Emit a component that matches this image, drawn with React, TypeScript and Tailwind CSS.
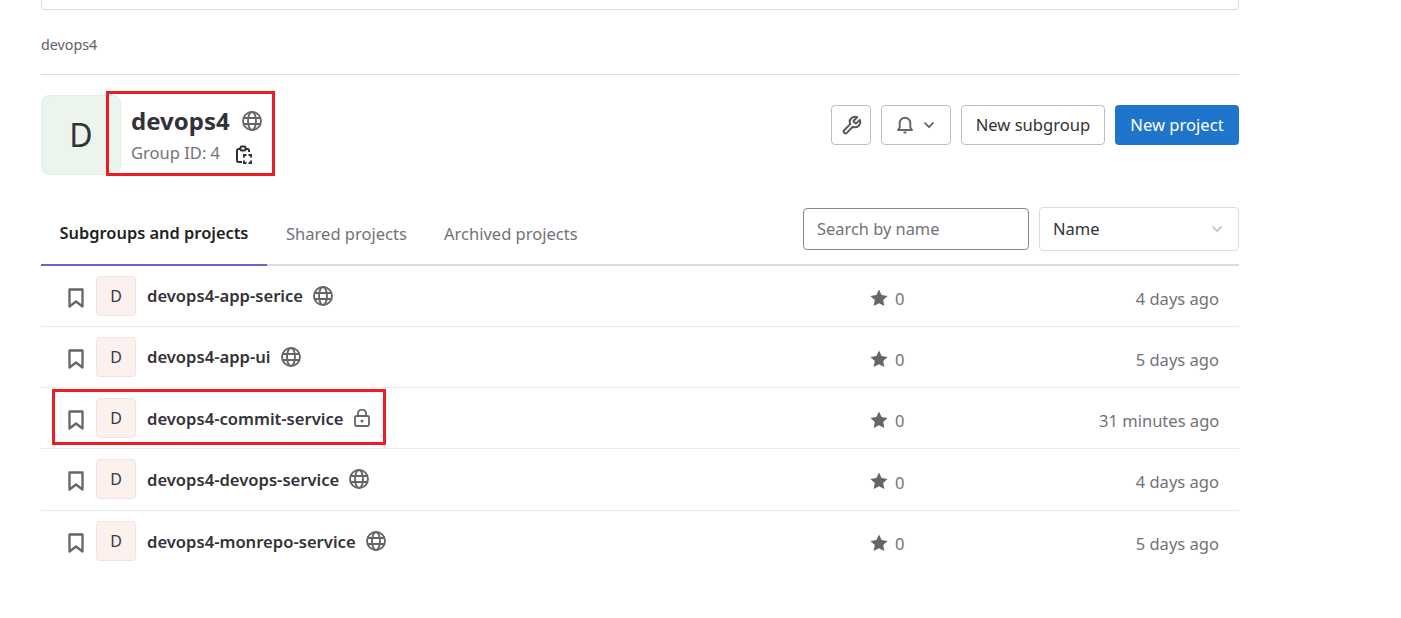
import React from "react";

interface Project {
  name: string;
  isPrivate?: boolean;
  updated: string;
  highlighted?: boolean;
}

const projects: Project[] = [
  { name: "devops4-app-serice", updated: "4 days ago" },
  { name: "devops4-app-ui", updated: "5 days ago" },
  { name: "devops4-commit-service", isPrivate: true, updated: "31 minutes ago", highlighted: true },
  { name: "devops4-devops-service", updated: "4 days ago" },
  { name: "devops4-monrepo-service", updated: "5 days ago" },
];

function GlobeIcon({ className }: { className: string }) {
  return (
    <svg viewBox="0 0 20 20" fill="none" stroke="#666" strokeWidth="1.9" className={className}>
      <circle cx="10" cy="10" r="9" />
      <ellipse cx="10" cy="10" rx="4" ry="9" />
      <path d="M1.8 7h16.4M1.8 13h16.4" />
    </svg>
  );
}

function LockIcon() {
  return (
    <svg viewBox="0 0 16 18" fill="none" stroke="#666" strokeWidth="1.8" className="h-[18px] w-4">
      <rect x="1" y="7" width="14" height="10" rx="1.5" />
      <path d="M4 7V4.500a4 4 0 0 1 8 0V7" />
      <circle cx="8" cy="12" r="1.500" fill="#666" stroke="none" />
    </svg>
  );
}

function BookmarkIcon() {
  return (
    <svg viewBox="0 0 16 20" fill="none" stroke="#666" strokeWidth="2.3" className="mt-1 h-5 w-4">
      <path d="M1.500 1.500h13v17L8 13.500l-6.500 5z" strokeLinejoin="round" />
    </svg>
  );
}

function StarIcon() {
  return (
    <svg viewBox="0 0 18 18" fill="#666" className="h-[18px] w-[18px]">
      <path d="M9 .6l2.600 5.500 6 .8-4.400 4.200 1.100 6L9 14.200 3.700 17.100l1.100-6L.4 6.900l6-.8z" />
    </svg>
  );
}

function Chevron({ className, color }: { className: string; color: string }) {
  return (
    <svg viewBox="0 0 12 8" fill="none" stroke={color} strokeWidth="1.600" className={className}>
      <path d="M1.500 1.500L6 6l4.500-4.500" />
    </svg>
  );
}

function ProjectRow({ project }: { project: Project }) {
  return (
    <div className="relative flex h-[61.25px] items-center border-b border-[#ececef] pl-[27px] pr-5 last:border-b-0">
      <BookmarkIcon />
      <div className="ml-3 flex h-10 w-10 items-center justify-center rounded border border-[#f0e4e1] bg-[#fcf1ef] text-[16px] text-[#3a383f]">
        D
      </div>
      <span className="ml-[11px] pt-[2px] text-[16.6px] font-semibold text-[#333238]">{project.name}</span>
      <span className="ml-[10px] flex items-center">
        {project.isPrivate ? <LockIcon /> : <GlobeIcon className="h-5 w-5" />}
      </span>
      <div className="ml-auto flex w-[229px] items-center gap-[7px] pt-1 text-[16.5px] text-[#737278]">
        <StarIcon />
        <span className="pt-[3px]">0</span>
      </div>
      <span className="w-[120px] whitespace-nowrap pt-[7px] text-right text-[16.55px] text-[#737278]">
        {project.updated}
      </span>
      {project.highlighted && (
        <div className="absolute left-[11px] top-px h-[56px] w-[334px] border-[3px] border-[#ed1c24]" />
      )}
    </div>
  );
}

export default function App() {
  return (
    <div className="h-[618px] w-[1401px] overflow-hidden bg-white font-['Noto_Sans','Open_Sans',sans-serif]">
      <div className="ml-[41px] w-[1198px]">
        <div className="h-[10px] rounded-b border-x border-b border-[#dcdcde]" />

        <div className="flex h-[65px] items-center border-b border-[#dcdcde] pt-[6px] text-[14.3px] text-[#626168]">
          devops4
        </div>

        {/* Group header */}
        <div className="relative mt-5 flex h-20 items-start">
          <div className="flex h-20 w-20 items-center justify-center rounded-lg border border-[#e6eee8] bg-[#ecf4ee] text-[32px] text-[#333238]">
            D
          </div>
          <div className="ml-[10px] flex flex-col">
            <div className="flex items-center gap-3">
              <h1 className="text-[24px] font-bold leading-[52px] text-[#333238]">devops4</h1>
              <GlobeIcon className="h-5 w-5" />
            </div>
            <div className="-mt-[6px] flex items-center gap-4 text-[16.55px] leading-6 text-[#737278]">
              <span>Group ID: 4</span>
              <svg viewBox="0 0 16 20" fill="none" stroke="#333238" strokeWidth="2" className="mt-[3px] h-5 w-4">
                <path d="M6 17H2.500A1.500 1.500 0 0 1 1 15.500v-10A1.500 1.500 0 0 1 2.500 4H4M10 4h1.500A1.500 1.500 0 0 1 13 5.500V7" />
                <rect x="4.500" y="1.500" width="5" height="4" rx="1" />
                <path d="M8 12.500V10h2.500M12.500 10H15v2.500M15 15.500V18h-2.500M10.500 18H8v-2.500" />
              </svg>
            </div>
          </div>

          <div className="ml-auto mt-[10px] flex items-center gap-[10px]">
            <button className="flex h-10 w-10 items-center justify-center rounded border border-[#bfbfc3] bg-white">
              <svg viewBox="0 0 24 24" fill="none" stroke="#555" strokeWidth="2.200" strokeLinecap="round" strokeLinejoin="round" className="h-[21px] w-[21px]">
                <path d="M14.700 6.300a1 1 0 0 0 0 1.400l1.600 1.600a1 1 0 0 0 1.400 0l3.770-3.770a6 6 0 0 1-7.940 7.940l-6.910 6.910a2.120 2.120 0 0 1-3-3l6.910-6.910a6 6 0 0 1 7.940-7.940z" />
              </svg>
            </button>
            <button className="flex h-10 w-[70px] items-center justify-center gap-[10px] rounded border border-[#bfbfc3] bg-white">
              <svg viewBox="0 0 16 18" fill="none" stroke="#666" strokeWidth="1.900" className="h-[18px] w-4">
                <path d="M1 14h14l-1.700-2.500V7a5.300 5.300 0 0 0-10.600 0v4.500z" strokeLinejoin="round" />
                <path d="M6.500 16.500h3" />
              </svg>
              <Chevron className="h-2 w-3" color="#555" />
            </button>
            <button className="h-10 w-[144px] rounded border border-[#bfbfc3] bg-white text-[16.6px] text-[#333238]">
              New subgroup
            </button>
            <button className="h-10 w-[124px] rounded bg-[#1f75cb] text-[16.6px] text-white">New project</button>
          </div>

          <div className="absolute left-[65px] top-[-4px] h-[85px] w-[169px] border-[3px] border-[#ed1c24]" />
        </div>

        {/* Tabs and filters */}
        <div className="mt-[32px] flex h-[58.5px] items-start border-b-2 border-[#dcdcde]">
          <div className="flex h-[58.5px] w-[226px] items-center justify-center border-b-2 border-[#6666c4] pb-[4px] text-[16.4px] font-semibold text-[#1f1e24]">
            Subgroups and projects
          </div>
          <div className="flex h-[54px] items-center pl-[19px] text-[16.55px] text-[#737278]">Shared projects</div>
          <div className="flex h-[54px] items-center pl-[37px] text-[16.55px] text-[#737278]">Archived projects</div>
          <div className="ml-auto flex items-center gap-[10px]">
            <div className="flex h-[42px] w-[226px] items-center rounded border border-[#89888d] pl-[13px] text-[16.4px] text-[#737278]">
              Search by name
            </div>
            <div className="flex h-11 w-[200px] items-center justify-between rounded border border-[#dcdcde] pl-[13px] pr-[15px] text-[16.5px] text-[#333238]">
              Name
              <Chevron className="h-2 w-3" color="#bfbfc3" />
            </div>
          </div>
        </div>

        {/* Project list */}
        <div>
          {projects.map((project) => (
            <ProjectRow key={project.name} project={project} />
          ))}
        </div>
      </div>
    </div>
  );
}
